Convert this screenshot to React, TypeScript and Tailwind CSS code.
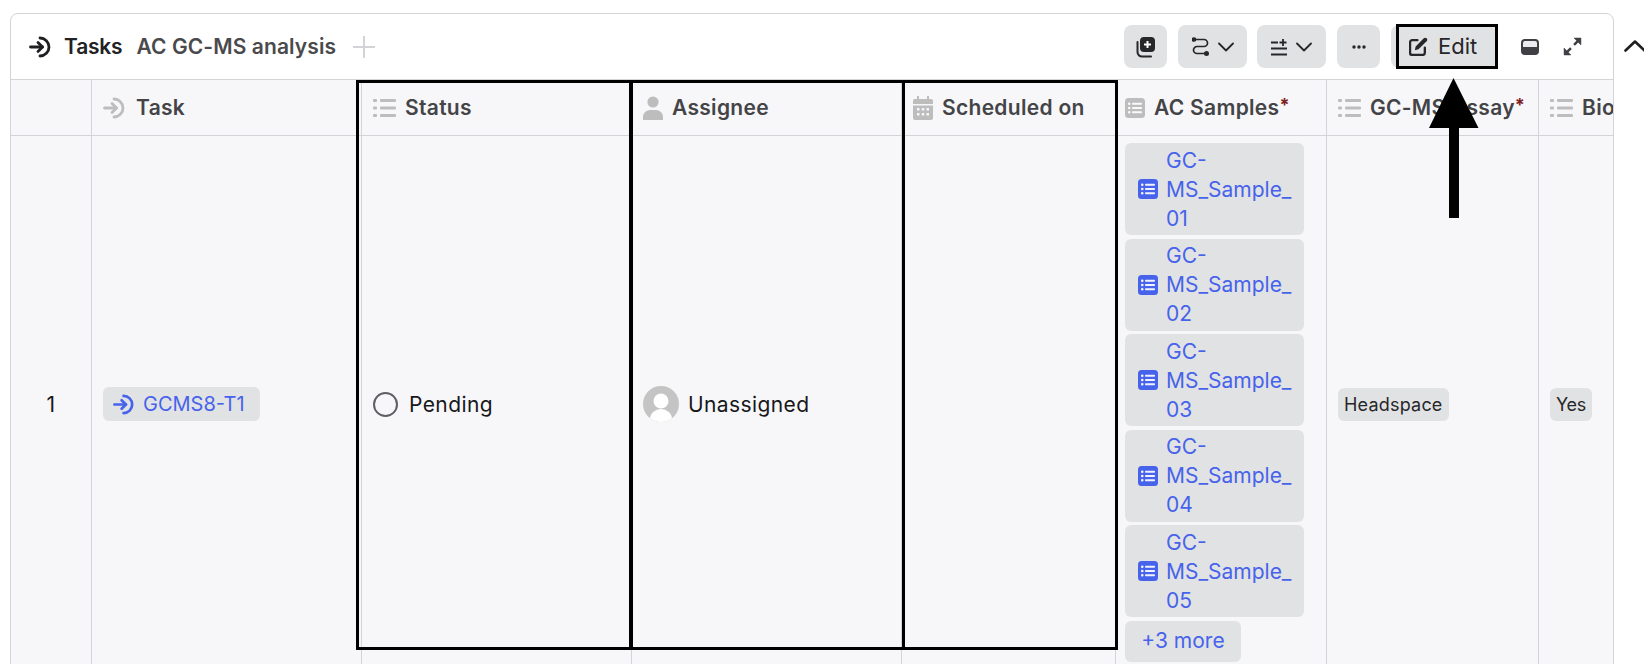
const ICON_GRAY = "#bdbdbd";

function TaskIcon({ color, size = 24 }: { color: string; size?: number }) {
  return (
    <svg width={size} height={size} viewBox="0 0 24 24" fill="none" stroke={color} strokeWidth="2.800" strokeLinecap="round" strokeLinejoin="round" className="shrink-0">
      <path d="M1.500 12h12" />
      <path d="M9 7.500l4.500 4.500-4.500 4.500" />
      <path d="M11 3a9 9 0 1 1 0 18" />
    </svg>
  );
}

function ListIcon() {
  return (
    <svg width="23" height="20" viewBox="0 0 23 20" fill={ICON_GRAY} className="shrink-0">
      <rect x="0" y="1" width="4" height="3" rx="1" />
      <rect x="7" y="1" width="16" height="3" rx="1" />
      <rect x="0" y="8.500" width="4" height="3" rx="1" />
      <rect x="7" y="8.500" width="16" height="3" rx="1" />
      <rect x="0" y="16" width="4" height="3" rx="1" />
      <rect x="7" y="16" width="16" height="3" rx="1" />
    </svg>
  );
}

function UserIcon() {
  return (
    <svg width="20" height="24" viewBox="0 0 20 24" fill={ICON_GRAY} className="shrink-0">
      <circle cx="10" cy="6" r="5.600" />
      <path d="M0 24v-3c0-4 3.500-7 7-7h6c3.500 0 7 3 7 7v3z" />
    </svg>
  );
}

function CalendarIcon() {
  return (
    <svg width="20" height="24" viewBox="0 0 20 24" fill={ICON_GRAY} className="shrink-0">
      <path d="M4 0h2v3h8V0h2v3h2a2 2 0 0 1 2 2v3H0V5a2 2 0 0 1 2-2h2z" />
      <path fillRule="evenodd" d="M0 9.500h20V22a2 2 0 0 1-2 2H2a2 2 0 0 1-2-2zM4 12v2.500h2.500V12zm4.800 0v2.500h2.500V12zm4.700 0v2.500H16V12zM4 17v2.500h2.500V17zm4.800 0v2.500h2.500V17zm4.700 0v2.500H16V17z" />
    </svg>
  );
}

function SheetIcon({ color, size = 20 }: { color: string; size?: number }) {
  return (
    <svg width={size} height={size} viewBox="0 0 20 20" className="shrink-0">
      <rect width="20" height="20" rx="3.500" fill={color} />
      <g fill="#ffffff" opacity="0.92">
        <rect x="3" y="4.500" width="2.500" height="2.500" rx="1" />
        <rect x="7" y="4.700" width="10" height="2" rx="0.800" />
        <rect x="3" y="8.700" width="2.500" height="2.500" rx="1" />
        <rect x="7" y="9" width="10" height="2" rx="0.800" />
        <rect x="3" y="13" width="2.500" height="2.500" rx="1" />
        <rect x="7" y="13.300" width="10" height="2" rx="0.800" />
      </g>
    </svg>
  );
}

function Chevron() {
  return (
    <svg width="16" height="10" viewBox="0 0 16 10" fill="none" stroke="#27272a" strokeWidth="1.800" strokeLinecap="round" strokeLinejoin="round">
      <path d="M1 1.500l7 7 7-7" />
    </svg>
  );
}

function ColumnHead({ icon, label, required, width, last, tight }: { icon: React.ReactNode; label: string; required?: boolean; width: string; last?: boolean; tight?: boolean }) {
  return (
    <div className={`${width} shrink-0 h-full flex items-center gap-[9px] overflow-hidden ${tight ? "pl-[9px]" : "pl-[11px]"} ${last ? "" : "border-r border-[#d4d4d8]"}`}>
      {icon}
      <span className="text-[21px] font-semibold tracking-[0.3px] text-[#444447] whitespace-nowrap">
        {label}
        {required && <span className="text-[#7f1d1d] text-[18px] font-bold align-[4px]">*</span>}
      </span>
    </div>
  );
}

function SampleChip({ name }: { name: string }) {
  return (
    <div className="w-[179px] h-[92px] bg-[#e1e2e4] rounded-[6px] flex items-center gap-[8px] pl-[13px] shrink-0">
      <SheetIcon color="#4763eb" />
      <div className="text-[#4763eb] text-[21px] leading-[29px]">
        <div>GC-</div>
        <div>MS_Sample_</div>
        <div>{name}</div>
      </div>
    </div>
  );
}

export default function App() {
  return (
    <div className="w-[1644px] h-[664px] overflow-hidden bg-white pt-[13px] pl-[10px] flex relative font-['Inter','Liberation_Sans',sans-serif]">
      <div className="w-[1604px] h-[700px] shrink-0 border border-[#d4d4d8] rounded-t-[8px]">
        {/* title bar */}
        <div className="h-[66px] flex items-center border-b border-[#d4d4d8] pl-[18px]">
          <TaskIcon color="#1f1f22" />
          <span className="ml-[11px] text-[21px] font-semibold tracking-[-0.2px] text-[#222225]">Tasks</span>
          <span className="ml-[14px] text-[21px] font-semibold tracking-[0.1px] text-[#4a4a4d]">AC GC-MS analysis</span>
          <svg width="22" height="22" viewBox="0 0 22 22" stroke="#d4d4d8" strokeWidth="2" className="ml-[17px]">
            <path d="M11 0v22M0 11h22" />
          </svg>

          <div className="ml-auto flex items-center">
            <button className="w-[43px] h-[43px] bg-[#e1e2e4] rounded-[8px] flex items-center justify-center">
              <svg width="20" height="22" viewBox="0 0 20 22" fill="none">
                <rect x="4" y="1" width="15" height="15" rx="4" fill="#27272a" />
                <path d="M11.500 5v7M8 8.500h7" stroke="#ffffff" strokeWidth="2" />
                <path d="M1.500 6v10a4.500 4.500 0 0 0 4.500 4.500h9" stroke="#27272a" strokeWidth="2" strokeLinecap="round" />
              </svg>
            </button>
            <button className="ml-[11px] w-[69px] h-[43px] bg-[#e1e2e4] rounded-[8px] flex items-center justify-center gap-[8px]">
              <svg width="18" height="20" viewBox="0 0 18 20" fill="none" stroke="#27272a" strokeWidth="1.700">
                <circle cx="2" cy="2.500" r="1.500" fill="#27272a" />
                <path d="M3 2.500h9a3.500 3.500 0 0 1 0 7H5a3.500 3.500 0 0 0 0 7h8" />
                <circle cx="14.500" cy="16.500" r="2.500" fill="#27272a" stroke="none" />
              </svg>
              <Chevron />
            </button>
            <button className="ml-[10px] w-[69px] h-[43px] bg-[#e1e2e4] rounded-[8px] flex items-center justify-center gap-[8px]">
              <svg width="17" height="18" viewBox="0 0 17 18" fill="none" stroke="#27272a" strokeWidth="1.800">
                <path d="M0 4.500h7M0 10.500h16M0 16.500h16M12 1v7M8.500 4.500h7" />
              </svg>
              <Chevron />
            </button>
            <button className="ml-[11px] w-[43px] h-[43px] bg-[#e1e2e4] rounded-[8px] flex items-center justify-center">
              <svg width="14" height="4" viewBox="0 0 14 4" fill="#27272a">
                <circle cx="2" cy="2" r="1.700" />
                <circle cx="7" cy="2" r="1.700" />
                <circle cx="12" cy="2" r="1.700" />
              </svg>
            </button>
            <button className="ml-[11px] w-[107px] h-[43px] bg-[#e1e2e4] rounded-[8px] flex items-center pl-[18px] gap-[10px] text-[22px] text-[#27272a]">
              <svg width="19" height="19" viewBox="0 0 18 18" fill="none">
                <path d="M8 3H3a2 2 0 0 0-2 2v10a2 2 0 0 0 2 2h10a2 2 0 0 0 2-2v-5" stroke="#27272a" strokeWidth="2.200" strokeLinecap="round" />
                <path d="M5.500 12.500l.8-3.500L14 1.300a1.500 1.500 0 0 1 2.700 2.700L9 11.700z" fill="#27272a" />
              </svg>
              Edit
            </button>
            <svg width="18" height="16" viewBox="0 0 18 16" className="ml-[23px]">
              <rect x="1" y="1" width="16" height="14" rx="3" fill="#ececee" stroke="#3f3f44" strokeWidth="2" />
              <path d="M1 8h16v4a3 3 0 0 1-3 3H4a3 3 0 0 1-3-3z" fill="#3f3f44" />
            </svg>
            <svg width="19" height="19" viewBox="0 0 18 18" fill="#3f3f44" stroke="#3f3f44" className="ml-[24px] mr-[31px]">
              <path d="M10.500 1H17v6.500zM7.500 17H1v-6.500z" strokeWidth="0.500" />
              <path d="M14 4l-3.500 3.500M4 14l3.500-3.500" strokeWidth="2.400" fill="none" />
            </svg>
          </div>
        </div>

        {/* column headers */}
        <div className="h-[56px] flex bg-[#f7f7fa] border-b border-[#d4d4d8]">
          <div className="w-[81px] shrink-0 h-full border-r border-[#d4d4d8]" />
          <ColumnHead width="w-[270px]" label="Task" icon={<TaskIcon color={ICON_GRAY} />} />
          <ColumnHead width="w-[270px]" label="Status" icon={<ListIcon />} />
          <ColumnHead width="w-[270px]" label="Assignee" icon={<UserIcon />} />
          <ColumnHead width="w-[214px]" label="Scheduled on" icon={<CalendarIcon />} />
          <ColumnHead width="w-[211px]" label="AC Samples" required tight icon={<SheetIcon color={ICON_GRAY} />} />
          <ColumnHead width="w-[212px]" label="GC-MS Assay" required icon={<ListIcon />} />
          <ColumnHead width="w-[74px]" label="Bio" last icon={<ListIcon />} />
        </div>

        {/* row */}
        <div className="h-[536px] flex bg-[#f7f7fa] text-[21px] tracking-[0.4px] text-[#18181b]">
          <div className="w-[81px] shrink-0 border-r border-[#d4d4d8] flex items-center justify-center">
            <span className="mt-[2px]">1</span>
          </div>
          <div className="w-[270px] shrink-0 border-r border-[#d4d4d8] flex items-center pl-[11px]">
            <div className="w-[157px] h-[34px] bg-[#e1e2e4] rounded-[6px] flex items-center pl-[10px] gap-[7px] text-[20px] tracking-normal text-[#4763eb]">
              <TaskIcon color="#4763eb" size={23} />
              GCMS8-T1
            </div>
          </div>
          <div className="w-[270px] shrink-0 border-r border-[#d4d4d8] flex items-center pl-[11px] gap-[11px]">
            <div className="w-[25px] h-[25px] rounded-full border-2 border-[#5f5f63] shrink-0" />
            <span className="mt-[2px]">Pending</span>
          </div>
          <div className="w-[270px] shrink-0 border-r border-[#d4d4d8] flex items-center pl-[11px] gap-[9px]">
            <svg width="36" height="36" viewBox="0 0 36 36" className="shrink-0">
              <clipPath id="avatarClip"><circle cx="18" cy="18" r="18" /></clipPath>
              <g clipPath="url(#avatarClip)">
                <rect width="36" height="36" fill="#c4c4c4" />
                <circle cx="18" cy="15" r="7.500" fill="#ffffff" />
                <ellipse cx="18" cy="33" rx="11" ry="10" fill="#ffffff" />
              </g>
            </svg>
            <span className="mt-[2px]">Unassigned</span>
          </div>
          <div className="w-[214px] shrink-0 border-r border-[#d4d4d8]" />
          <div className="w-[211px] shrink-0 border-r border-[#d4d4d8] pl-[9px] pt-[7px] flex flex-col gap-[3.5px] tracking-normal">
            <SampleChip name="01" />
            <SampleChip name="02" />
            <SampleChip name="03" />
            <SampleChip name="04" />
            <SampleChip name="05" />
            <div className="w-[116px] h-[41px] bg-[#e1e2e4] rounded-[6px] flex items-center justify-center text-[#4763eb] text-[21px] shrink-0">+3 more</div>
          </div>
          <div className="w-[212px] shrink-0 border-r border-[#d4d4d8] flex items-center pl-[11px] tracking-normal">
            <div className="h-[33px] px-[6px] bg-[#e1e2e4] rounded-[6px] flex items-center text-[18px] tracking-[0.2px] text-[#27272a]">Headspace</div>
          </div>
          <div className="w-[74px] shrink-0 flex items-center pl-[11px] tracking-normal">
            <div className="h-[33px] px-[6px] bg-[#e1e2e4] rounded-[6px] flex items-center text-[18px] tracking-[-0.3px] text-[#27272a]">Yes</div>
          </div>
        </div>
      </div>

      {/* collapse toggle, cut off by the window edge */}
      <svg width="22" height="12" viewBox="0 0 22 12" fill="none" stroke="#1f1f22" strokeWidth="2.600" strokeLinecap="round" strokeLinejoin="round" className="shrink-0 ml-[10px] mt-[27px]">
        <path d="M1.500 10.500L11 1.500l9.500 9" />
      </svg>

      {/* annotation overlays */}
      <div className="absolute left-[356px] top-[80px] w-[276px] h-[570px] border-[3px] border-black" />
      <div className="absolute left-[630px] top-[80px] w-[275px] h-[570px] border-[3px] border-black" />
      <div className="absolute left-[902px] top-[80px] w-[216px] h-[570px] border-[3px] border-black" />
      <div className="absolute left-[1396px] top-[24px] w-[102px] h-[45px] border-[3px] border-black" />
      <svg width="50" height="142" viewBox="0 0 50 142" fill="#000000" className="absolute left-[1429px] top-[78px]">
        <path d="M24.500 0L49.500 50H30V140H20V50H0z" />
      </svg>
    </div>
  );
}
